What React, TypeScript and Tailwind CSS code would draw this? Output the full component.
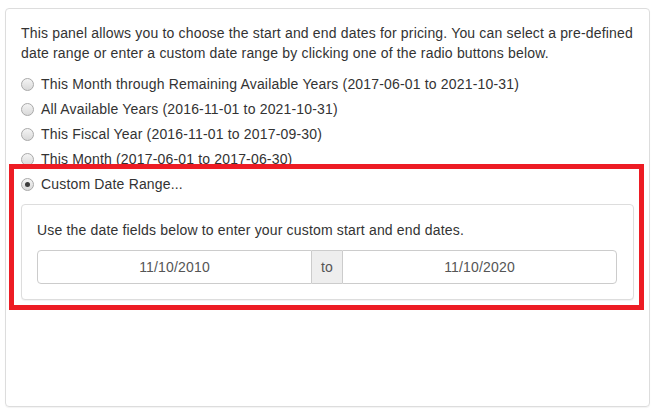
import { useState } from "react";

const OPTIONS = [
  { id: "remaining", label: "This Month through Remaining Available Years (2017-06-01 to 2021-10-31)" },
  { id: "all", label: "All Available Years (2016-11-01 to 2021-10-31)" },
  { id: "fiscal", label: "This Fiscal Year (2016-11-01 to 2017-09-30)" },
  { id: "month", label: "This Month (2017-06-01 to 2017-06-30)" },
];

function Radio({ checked }: { checked: boolean }) {
  return (
    <span className="flex h-5 w-5 shrink-0 items-center">
      <span className="flex h-[13px] w-[13px] items-center justify-center rounded-full border border-[#a9a9a9] bg-gradient-to-b from-[#f4f4f4] to-[#d9d9d9]">
        {checked ? <span className="h-[5px] w-[5px] rounded-full bg-[#3c3c3c]" /> : null}
      </span>
    </span>
  );
}

export default function App() {
  const [choice, setChoice] = useState("custom");
  const [start, setStart] = useState("11/10/2010");
  const [end, setEnd] = useState("11/10/2020");

  return (
    <div className="h-[415px] w-[656px] bg-white pl-[5px] pt-[8px] font-['Liberation_Sans',Arial,sans-serif] text-[14px] leading-5 tracking-[0.17px] text-[#333]">
      <div className="h-[399px] w-[645px] rounded-[4px] border border-[#ddd] p-[15px] pt-[14px] shadow-[0_1px_1px_rgba(0,0,0,0.05)]">
        <p>
          This panel allows you to choose the start and end dates for pricing. You can select a pre-defined
          date range or enter a custom date range by clicking one of the radio buttons below.
        </p>
        <div className="mt-[11px] flex flex-col gap-[5px]">
          {OPTIONS.map((o) => (
            <label key={o.id} className="flex h-5 cursor-pointer items-center" onClick={() => setChoice(o.id)}>
              <Radio checked={choice === o.id} />
              <span>{o.label}</span>
            </label>
          ))}
          <div className="relative">
            <label className="flex h-5 cursor-pointer items-center" onClick={() => setChoice("custom")}>
              <Radio checked={choice === "custom"} />
              <span>Custom Date Range...</span>
            </label>
            <div className="mt-[10px] rounded-[4px] border border-[#ddd] bg-white p-[15px] shadow-[0_1px_1px_rgba(0,0,0,0.05)]">
              <p className="mb-[10px]">Use the date fields below to enter your custom start and end dates.</p>
              <div className="mr-[1px] flex h-[34px] text-[#555]">
                <input
                  value={start}
                  onChange={(e) => setStart(e.target.value)}
                  className="min-w-0 flex-1 rounded-l-[4px] border border-[#ccc] bg-white text-center outline-none"
                />
                <span className="flex w-[30px] items-center justify-center border-y border-[#ccc] bg-[#eee]">to</span>
                <input
                  value={end}
                  onChange={(e) => setEnd(e.target.value)}
                  className="min-w-0 flex-1 rounded-r-[4px] border border-[#ccc] bg-white text-center outline-none"
                />
              </div>
            </div>
            <div className="pointer-events-none absolute -bottom-[10px] -left-[12px] -right-[10px] -top-[10px] border-[5px] border-[#ed1c24]" />
          </div>
        </div>
      </div>
    </div>
  );
}
